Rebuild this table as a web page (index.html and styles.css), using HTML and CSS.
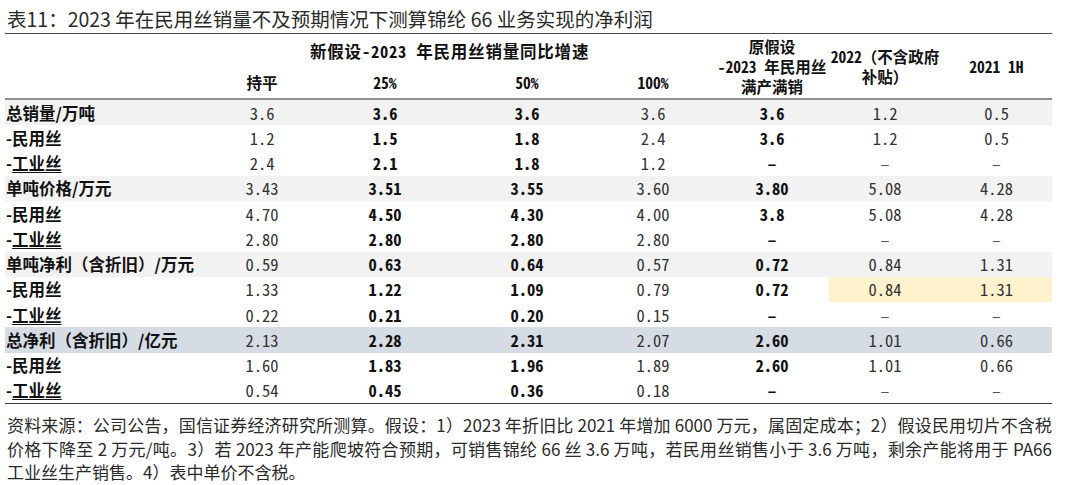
FILE: index.html
```html
<!DOCTYPE html>
<html lang="zh-CN">
<head>
<meta charset="utf-8">
<title>表11</title>
<link rel="stylesheet" href="styles.css">
</head>
<body>
<div class="page">
  <div class="title">表11：2023 年在民用丝销量不及预期情况下测算锦纶 66 业务实现的净利润</div>
  <div class="table">
    <div class="head">
      <div class="h-label"></div>
      <div class="h-group">新假设-2023 年民用丝销量同比增速</div>
      <div class="h-sub c1">持平</div>
      <div class="h-sub c2">25%</div>
      <div class="h-sub c3">50%</div>
      <div class="h-sub c4">100%</div>
      <div class="h-tall c5">原假设<br>-2023 年民用丝<br>满产满销</div>
      <div class="h-tall c6">2022（不含政府<br>补贴）</div>
      <div class="h-tall c7">2021 1H</div>
    </div>

    <div class="row gray"><div class="lab">总销量/万吨</div><div>3.6</div><div class="b">3.6</div><div class="b">3.6</div><div>3.6</div><div class="b">3.6</div><div>1.2</div><div>0.5</div></div>
    <div class="row"><div class="lab">-民用丝</div><div>1.2</div><div class="b">1.5</div><div class="b">1.8</div><div>2.4</div><div class="b">3.6</div><div>1.2</div><div>0.5</div></div>
    <div class="row"><div class="lab">-<u>工业丝</u></div><div>2.4</div><div class="b">2.1</div><div class="b">1.8</div><div>1.2</div><div class="b dash">–</div><div class="dash">–</div><div class="dash">–</div></div>
    <div class="row gray"><div class="lab">单吨价格/万元</div><div>3.43</div><div class="b">3.51</div><div class="b">3.55</div><div>3.60</div><div class="b">3.80</div><div>5.08</div><div>4.28</div></div>
    <div class="row"><div class="lab">-民用丝</div><div>4.70</div><div class="b">4.50</div><div class="b">4.30</div><div>4.00</div><div class="b">3.8</div><div>5.08</div><div>4.28</div></div>
    <div class="row"><div class="lab">-<u>工业丝</u></div><div>2.80</div><div class="b">2.80</div><div class="b">2.80</div><div>2.80</div><div class="b dash">–</div><div class="dash">–</div><div class="dash">–</div></div>
    <div class="row gray"><div class="lab">单吨净利（含折旧）/万元</div><div>0.59</div><div class="b">0.63</div><div class="b">0.64</div><div>0.57</div><div class="b">0.72</div><div>0.84</div><div>1.31</div></div>
    <div class="row"><div class="lab">-民用丝</div><div>1.33</div><div class="b">1.22</div><div class="b">1.09</div><div>0.79</div><div class="b">0.72</div><div class="yel">0.84</div><div class="yel">1.31</div></div>
    <div class="row"><div class="lab">-<u>工业丝</u></div><div>0.22</div><div class="b">0.21</div><div class="b">0.20</div><div>0.15</div><div class="b dash">–</div><div class="dash">–</div><div class="dash">–</div></div>
    <div class="row blue"><div class="lab">总净利（含折旧）/亿元</div><div>2.13</div><div class="b">2.28</div><div class="b">2.31</div><div>2.07</div><div class="b">2.60</div><div>1.01</div><div>0.66</div></div>
    <div class="row"><div class="lab">-民用丝</div><div>1.60</div><div class="b">1.83</div><div class="b">1.96</div><div>1.89</div><div class="b">2.60</div><div>1.01</div><div>0.66</div></div>
    <div class="row last"><div class="lab">-<u>工业丝</u></div><div>0.54</div><div class="b">0.45</div><div class="b">0.36</div><div>0.18</div><div class="b dash">–</div><div class="dash">–</div><div class="dash">–</div></div>
  </div>
  <p class="notes">资料来源：公司公告，国信证券经济研究所测算。假设：1）2023 年折旧比 2021 年增加 6000 万元，属固定成本；2）假设民用切片不含税价格下降至 2 万元/吨。3）若 2023 年产能爬坡符合预期，可销售锦纶 66 丝 3.6 万吨，若民用丝销售小于 3.6 万吨，剩余产能将用于 PA66 工业丝生产销售。4）表中单价不含税。</p>
</div>
</body>
</html>
```

FILE: styles.css
```css
html, body {
  margin: 0;
  padding: 0;
  background: #ffffff;
}

body {
  font-family: "Noto Sans CJK SC", "Noto Sans", sans-serif;
  color: #222;
}

.page {
  width: 1047px;
  margin-left: 5px;
  padding-top: 6px;
}

.title {
  font-size: 19.5px;
  line-height: 26px;
  height: 27px;
  padding-left: 2px;
  color: #2a2a2a;
  border-bottom: 1.5px solid #4a4a4a;
}

.table {
  font-family: "Noto Sans Mono CJK SC", "DejaVu Sans Mono", "Noto Sans CJK SC", monospace;
  font-size: 16.5px;
}

.head {
  display: grid;
  grid-template-columns: 212px 90px 156px 128px 124px 114px 112px 111px;
  grid-template-rows: 32px 32px;
  border-bottom: 2px solid #8f8f8f;
  font-weight: 700;
  color: #111;
}

.h-label {
  grid-column: 1;
  grid-row: 1 / span 2;
}

.h-group {
  grid-column: 2 / span 4;
  grid-row: 1;
  padding-left: 93px;
  display: flex;
  align-items: center;
  padding-top: 1px;
  letter-spacing: 0.8px;
  white-space: nowrap;
}

.h-sub {
  grid-row: 2;
  display: flex;
  align-items: center;
  justify-content: center;
  font-size: 15.5px;
}

.c1 { grid-column: 2; }
.c2 { grid-column: 3; }
.c3 { grid-column: 4; }
.c4 { grid-column: 5; }

.h-tall {
  grid-row: 1 / span 2;
  display: flex;
  align-items: center;
  justify-content: center;
  text-align: center;
  line-height: 20px;
  font-size: 15.5px;
  white-space: nowrap;
}

.c5 { grid-column: 6; }
.c6 { grid-column: 7; }
.c7 { grid-column: 8; }

.row {
  display: grid;
  grid-template-columns: 212px 90px 156px 128px 124px 114px 112px 111px;
  height: 25.25px;
  align-items: stretch;
  color: #333;
}

.row > div {
  display: flex;
  align-items: center;
  justify-content: center;
}

.row > .lab {
  justify-content: flex-start;
  padding-left: 1px;
  font-family: "Noto Sans CJK SC", sans-serif;
  font-weight: 700;
  color: #111;
}

.row u {
  text-decoration: underline;
  text-decoration-thickness: 1px;
  text-underline-offset: 2px;
}

.row > .b {
  font-weight: 700;
  color: #111;
}

.row > .dash {
  color: #555;
}

.row > .b.dash {
  color: #111;
}

.gray { background: #f2f2f2; }
.blue { background: #d6dce4; }
.yel { background: #fff2cc; }

.last {
  border-bottom: 1.5px solid #3a3a3a;
}

.notes {
  margin: 9px 0 0 0;
  padding-left: 2px;
  font-size: 17px;
  line-height: 23.5px;
  text-align: justify;
  color: #2a2a2a;
}
```
